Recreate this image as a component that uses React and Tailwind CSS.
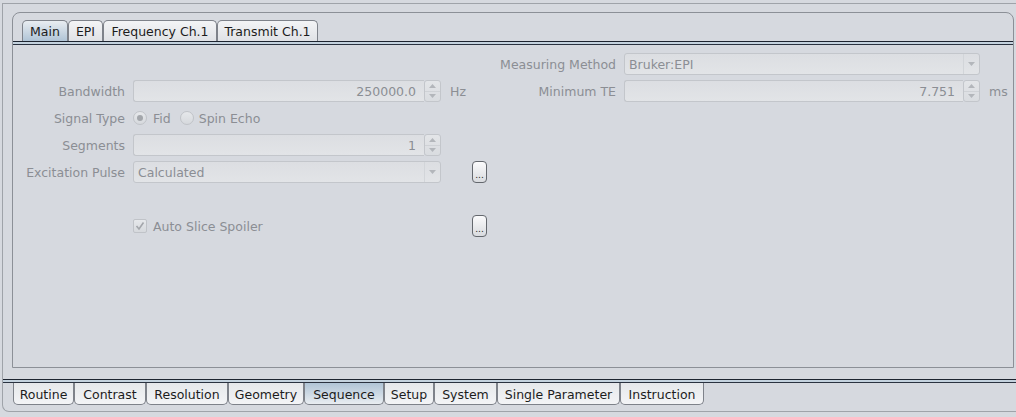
import React from "react";

const topTabs = [
  { label: "Main", w: "w-[46px]", active: true },
  { label: "EPI", w: "w-[35px]" },
  { label: "Frequency Ch.1", w: "w-[114px]" },
  { label: "Transmit Ch.1", w: "w-[101px]" },
];

const bottomTabs = [
  { label: "Routine", w: "w-[61px]" },
  { label: "Contrast", w: "w-[72px]" },
  { label: "Resolution", w: "w-[82px]" },
  { label: "Geometry", w: "w-[76px]" },
  { label: "Sequence", w: "w-[80px]", active: true },
  { label: "Setup", w: "w-[50px]" },
  { label: "System", w: "w-[63px]" },
  { label: "Single Parameter", w: "w-[123px]" },
  { label: "Instruction", w: "w-[84px]" },
];

const Spinner = () => (
  <div className="flex flex-col w-[17px] h-[22px] border border-[#c3c6cb] rounded-[3px] bg-gradient-to-b from-[#e3e5e8] to-[#d9dce0]">
    <div className="flex items-center justify-center flex-1 border-b border-[#cfd2d6]">
      <svg width="7" height="4" viewBox="0 0 7 4">
        <path d="M0 4 L3.5 0 L7 4 Z" fill="#b3b6bb" />
      </svg>
    </div>
    <div className="flex items-center justify-center flex-1">
      <svg width="7" height="4" viewBox="0 0 7 4">
        <path d="M0 0 L3.5 4 L7 0 Z" fill="#b3b6bb" />
      </svg>
    </div>
  </div>
);

const SpinField = ({ value, width }) => (
  <div className={`flex ${width} h-[22px]`}>
    <div className="flex items-center justify-end flex-1 h-full pt-[2px] pr-[8px] border border-[#c3c6cb] border-r-0 rounded-l-[3px] bg-gradient-to-b from-[#dcdee2] to-[#e2e4e7] text-[#8b8e94]">
      {value}
    </div>
    <Spinner />
  </div>
);

const Combo = ({ value, width }) => (
  <div className={`flex ${width} h-[22px] border border-[#c3c6cb] rounded-[3px] bg-gradient-to-b from-[#dcdee2] to-[#e2e4e7]`}>
    <div className="flex items-center flex-1 pt-[2px] pl-[4px] text-[#8b8e94]">{value}</div>
    <div className="flex items-center justify-center w-[16px] border-l border-[#d2d5d9]">
      <svg width="7" height="4" viewBox="0 0 7 4">
        <path d="M0 0 L3.5 4 L7 0 Z" fill="#b3b6bb" />
      </svg>
    </div>
  </div>
);

const Radio = ({ checked }) => (
  <div className="flex items-center justify-center w-[14px] h-[14px] rounded-full border border-[#c0c3c8] bg-gradient-to-b from-[#e6e8eb] to-[#d6d9dd]">
    {checked && <div className="w-[6px] h-[6px] rounded-full bg-[#a3a6ab]"></div>}
  </div>
);

const DotsButton = () => (
  <div className="flex items-end justify-center w-[15px] h-[22px] pb-[2px] rounded-[4px] border border-[#64686e] bg-gradient-to-b from-[#fbfbfc] to-[#d9dbdf] text-[9px] leading-[9px] text-[#222]">
    ...
  </div>
);

const Label = ({ children, w }) => <div className={`${w} pt-[2px] text-right text-[#8b8e94] whitespace-nowrap`}>{children}</div>;

const App = () => {
  return (
    <div className="w-[1016px] h-[417px] overflow-hidden bg-[#d6d9df] text-[12.5px] leading-[14px]" style={{ fontFamily: '"DejaVu Sans", sans-serif' }}>
      <div className="pt-[3px] pl-[2px]">
        <div className="flex flex-col w-[1014px] h-[409px] border-t border-l border-b border-[#9fa3a9] rounded-bl-[7px] pt-[8px]">
          {/* upper tabbed pane */}
          <div className="flex flex-col ml-[9px] w-[1002px] h-[356px] border border-[#8c9097] rounded-t-[8px]">
            <div className="flex pt-[7px] pl-[9px]">
              {topTabs.map((t) => (
                <div
                  key={t.label}
                  className={`${t.w} h-[21px] pt-[2px] flex items-center justify-center border border-b-0 border-[#7e828a] rounded-t-[5px] text-[#1c1c1c] ${
                    t.active ? "bg-gradient-to-b from-[#e9edf1] to-[#b0c4d6]" : "bg-gradient-to-b from-[#f3f4f6] to-[#e0e2e6]"
                  }`}
                >
                  {t.label}
                </div>
              ))}
            </div>
            <div className="h-[1px] bg-[#1d2430]"></div>
            <div className="h-[2px] bg-[#c4d2de]"></div>
            <div className="h-[1px] bg-[#2a3240]"></div>

            <div className="flex flex-col gap-[5px] pt-[8px]">
              <div className="flex items-center h-[22px]">
                <div className="w-[477px]"></div>
                <Label w="w-[126px]">Measuring Method</Label>
                <div className="ml-[8px]">
                  <Combo value="Bruker:EPI" width="w-[356px]" />
                </div>
              </div>

              <div className="flex items-center h-[22px]">
                <Label w="w-[112px]">Bandwidth</Label>
                <div className="ml-[8px]">
                  <SpinField value="250000.0" width="w-[308px]" />
                </div>
                <div className="w-[49px] pt-[2px] pl-[9px] text-[#8b8e94]">Hz</div>
                <Label w="w-[126px]">Minimum TE</Label>
                <div className="ml-[8px]">
                  <SpinField value="7.751" width="w-[356px]" />
                </div>
                <div className="pt-[2px] pl-[9px] text-[#8b8e94]">ms</div>
              </div>

              <div className="flex items-center h-[22px]">
                <Label w="w-[112px]">Signal Type</Label>
                <div className="flex items-center ml-[8px] text-[#8b8e94]">
                  <Radio checked />
                  <span className="ml-[6px] pt-[2px]">Fid</span>
                  <div className="ml-[9px]">
                    <Radio />
                  </div>
                  <span className="ml-[5px] pt-[2px]">Spin Echo</span>
                </div>
              </div>

              <div className="flex items-center h-[22px]">
                <Label w="w-[112px]">Segments</Label>
                <div className="ml-[8px]">
                  <SpinField value="1" width="w-[308px]" />
                </div>
              </div>

              <div className="flex items-center h-[22px]">
                <Label w="w-[112px]">Excitation Pulse</Label>
                <div className="ml-[8px]">
                  <Combo value="Calculated" width="w-[308px]" />
                </div>
                <div className="ml-[31px]">
                  <DotsButton />
                </div>
              </div>

              <div className="h-[22px]"></div>

              <div className="flex items-center h-[22px]">
                <div className="w-[112px]"></div>
                <div className="flex items-center ml-[8px] w-[308px] text-[#8b8e94]">
                  <div className="flex items-center justify-center w-[14px] h-[14px] rounded-[2px] border border-[#c0c3c8] bg-gradient-to-b from-[#e6e8eb] to-[#d6d9dd]">
                    <svg width="10" height="10" viewBox="0 0 10 10">
                      <path d="M1.5 5 L4 8 L8.5 1.5" stroke="#a3a6ab" strokeWidth="1.6" fill="none" />
                    </svg>
                  </div>
                  <span className="ml-[6px] pt-[2px]">Auto Slice Spoiler</span>
                </div>
                <div className="ml-[31px]">
                  <DotsButton />
                </div>
              </div>
            </div>
          </div>

          {/* bottom tab strip */}
          <div className="mt-[11px] h-[1px] bg-[#1d2430]"></div>
          <div className="h-[2px] bg-[#c4d2de]"></div>
          <div className="h-[1px] bg-[#2a3240]"></div>
          <div className="flex pl-[10px]">
            {bottomTabs.map((t) => (
              <div
                key={t.label}
                className={`${t.w} h-[22px] pt-[2px] flex items-center justify-center border border-t-0 border-[#7e828a] rounded-b-[5px] text-[#1c1c1c] ${
                  t.active ? "bg-gradient-to-b from-[#b0c4d6] to-[#e9edf1]" : "bg-gradient-to-b from-[#e6e8eb] to-[#f3f4f6]"
                }`}
              >
                {t.label}
              </div>
            ))}
          </div>
        </div>
      </div>
    </div>
  );
};

export default App;
